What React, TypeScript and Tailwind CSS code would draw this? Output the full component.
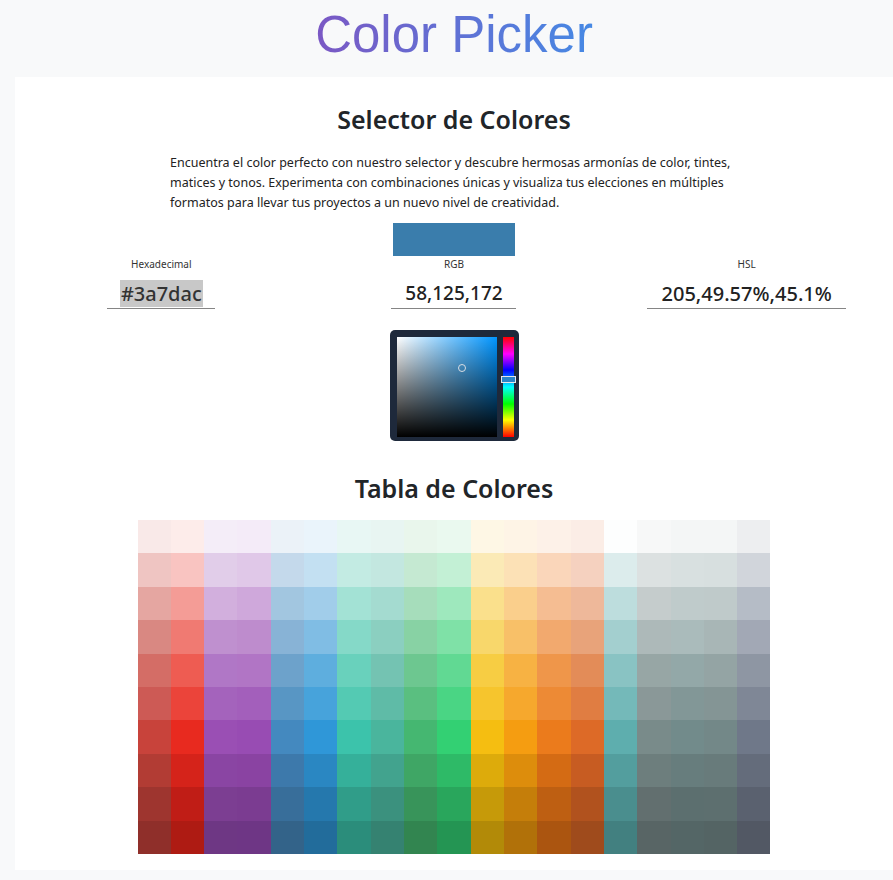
import React from 'react';

const palette: string[][] = [
  ['#f9e9e8', '#efc5c2', '#e5a6a1', '#d98882', '#d46d66', '#cd5a55', '#c8433b', '#b23c34', '#9e352f', '#8f2f2a'],
  ['#fdecea', '#f9c4c1', '#f49c96', '#f07a72', '#ee5c52', '#eb443a', '#e82a1f', '#d5231a', '#c01d16', '#ae1b13'],
  ['#f4edf8', '#e1cde9', '#d2afdd', '#bf90cf', '#b077c6', '#a463bc', '#9a4fb4', '#8a45a3', '#7c3e92', '#6e3784'],
  ['#f4ebf8', '#e0c8e8', '#cfa8db', '#be8ccd', '#b175c5', '#a35fbb', '#984cb3', '#8a43a2', '#7b3c91', '#6e3685'],
  ['#ebf2f8', '#c4d9eb', '#a2c6e0', '#88b3d6', '#6da2cb', '#5896c4', '#4489bf', '#3d79ab', '#386e9a', '#336389'],
  ['#eaf4fb', '#c3e0f2', '#a1cdea', '#80bde4', '#5eaede', '#47a3db', '#2f97d8', '#2a87c2', '#2578ad', '#226c9b'],
  ['#e8f7f4', '#c3ebe3', '#a3e2d5', '#85d9c8', '#69d1bc', '#54cab3', '#3cc3ab', '#35b09a', '#309d89', '#2b8d7b'],
  ['#e8f5f2', '#c3e7e0', '#a4dbd0', '#8bcfc0', '#74c3b2', '#5fbba7', '#4ab59d', '#42a38e', '#3b917e', '#358271'],
  ['#e9f6ec', '#c5e9d2', '#a6ddbb', '#88d2a4', '#6dc790', '#5abf80', '#45b771', '#3fa665', '#38945a', '#328550'],
  ['#eaf9ef', '#c3f0d5', '#9ee8bd', '#7fe1a7', '#61d993', '#4ad584', '#33d073', '#2eba67', '#29a65c', '#249553'],
  ['#fef7e5', '#fbeab6', '#fae08c', '#f8d76b', '#f7cd43', '#f6c52d', '#f5be11', '#ddab0b', '#c69a09', '#b28a08'],
  ['#fef4e6', '#fce1b6', '#facf8c', '#f8c068', '#f7b243', '#f6a82d', '#f59d11', '#dd8d0c', '#c57e0a', '#b17109'],
  ['#fdf1e8', '#fad6ba', '#f5bd92', '#f2a96e', '#ef964a', '#ed8a35', '#eb7b1c', '#d46b14', '#be5f12', '#ab5510'],
  ['#fbede6', '#f5d1bf', '#eeb89a', '#e8a37a', '#e38c58', '#e07d42', '#dd6a27', '#c75c22', '#b1521e', '#9f4b1c'],
  ['#fdfefe', '#dcecec', '#bddddd', '#a3cfcf', '#89c3c3', '#74b9b9', '#5eaeae', '#539e9e', '#4a8e8e', '#428080'],
  ['#f7f8f8', '#dce1e1', '#c5cccc', '#adb9b9', '#97a6a5', '#8a9898', '#798b8a', '#6d7e7d', '#626f6f', '#586565'],
  ['#f4f6f6', '#d8e0e0', '#bfcbcb', '#aabbbb', '#93a8a8', '#829797', '#728b8b', '#677d7d', '#5c6f6f', '#546666'],
  ['#f4f6f6', '#d7dfdf', '#bfcaca', '#a8b6b6', '#94a4a4', '#849595', '#738888', '#687b7b', '#5d6f6f', '#546464'],
  ['#edeef0', '#d1d5db', '#b5bcc6', '#a2a8b5', '#8e96a3', '#7f8796', '#6f7889', '#646c7b', '#5a616f', '#525864'],
];

const rows = Array.from({ length: 10 }, (_, r) => palette.map((col) => col[r]));

const Picker: React.FC = () => {
  return (
    <div className="flex gap-[6px] rounded-[5px] bg-[#1e293b] pb-[4px] pl-[7px] pr-[5px] pt-[7px]">
      <div className="relative h-[100px] w-[100px] bg-[linear-gradient(to_right,#ffffff,#0095ff)]">
        <div className="absolute inset-0 bg-[linear-gradient(to_bottom,transparent,#000000)]" />
        <div className="absolute left-[61px] top-[27px] h-[8px] w-[8px] rounded-full border border-[#d8dde4]" />
      </div>
      <div className="relative h-[100px] w-[11px] bg-[linear-gradient(to_bottom,#ff0000_0%,#ff00ff_17%,#0000ff_33%,#00ffff_50%,#00ff00_67%,#ffff00_83%,#ff0000_100%)]">
        <div className="absolute left-[-2px] top-[39px] h-[7px] w-[15px] border border-[#e5e7eb] bg-[#2a84c8]" />
      </div>
    </div>
  );
};

export default function App() {
  return (
    <div className="min-h-screen bg-[#f8f9fa] font-['Noto_Sans',sans-serif] text-[#212529]">
      <header className="flex h-[77px] items-start justify-center pl-[15px] pt-[6px]">
        <h1 className="bg-[linear-gradient(to_right,#7b58c4,#4689e4)] bg-clip-text font-['Liberation_Sans',Arial,sans-serif] text-[51px] leading-[58px] text-transparent">
          Color Picker
        </h1>
      </header>

      <main className="ml-[15px] flex flex-col items-center bg-white pb-4 pt-[26px]">
        <h2 className="text-[25px] font-semibold leading-[32px]">Selector de Colores</h2>
        <p className="mt-[18px] w-[568px] whitespace-nowrap text-[12.5px] leading-[20px] text-[#222]">
          Encuentra el color perfecto con nuestro selector y descubre hermosas armonías de color, tintes,
          <br />
          matices y tonos. Experimenta con combinaciones únicas y visualiza tus elecciones en múltiples
          <br />
          formatos para llevar tus proyectos a un nuevo nivel de creatividad.
        </p>

        <div className="mt-[10px] grid w-full grid-cols-3 items-end">
          <div className="flex flex-col items-center">
            <span className="text-[10px] leading-[14px] text-[#333]">Hexadecimal</span>
            <div className="mt-[9px] flex w-[108px] justify-center border-b-[1.5px] border-[#858585] pb-[1px]">
              <span className="bg-[#c8c8c8] px-[1px] text-[20px] font-medium leading-[27px] text-[#333]">#3a7dac</span>
            </div>
          </div>
          <div className="flex flex-col items-center">
            <div className="mb-[1px] h-[33px] w-[122px] bg-[#3a7dac]" />
            <span className="text-[10px] leading-[14px] text-[#333]">RGB</span>
            <div className="mt-[9px] flex w-[125px] justify-center border-b-[1.5px] border-[#858585] pb-[1px]">
              <span className="text-[19px] font-medium leading-[27px] text-[#222]">58,125,172</span>
            </div>
          </div>
          <div className="flex flex-col items-center">
            <span className="text-[10px] leading-[14px] text-[#333]">HSL</span>
            <div className="mt-[9px] flex w-[199px] justify-center border-b-[1.5px] border-[#858585] pb-[1px]">
              <span className="text-[20px] font-medium leading-[27px] text-[#222]">205,49.57%,45.1%</span>
            </div>
          </div>
        </div>

        <div className="mt-[21px]">
          <Picker />
        </div>

        <h2 className="mt-[31px] text-[25px] font-semibold leading-[32px]">Tabla de Colores</h2>

        <div className="mt-[16px] grid w-[633px] grid-cols-19">
          {rows.map((row, r) =>
            row.map((c, i) => (
              <div key={`${r}-${i}`} className="h-[33.4px]" style={{ backgroundColor: c }} />
            ))
          )}
        </div>
      </main>
    </div>
  );
}
